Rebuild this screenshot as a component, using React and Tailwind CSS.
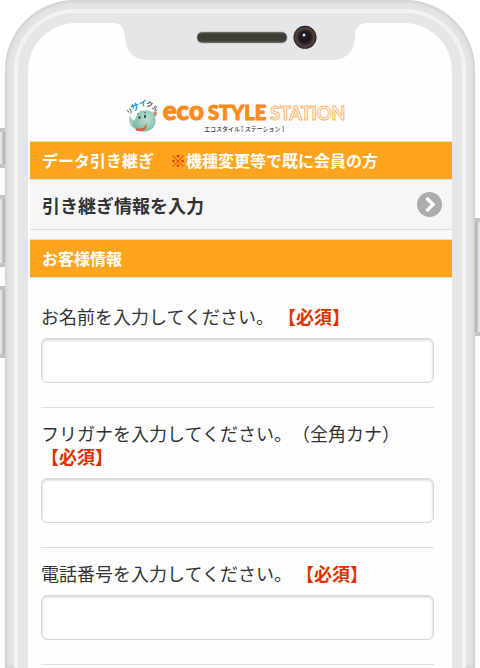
import React from "react";

const fields = [
  { id: "name", label: "お名前を入力してください。" },
  { id: "kana", label: "フリガナを入力してください。（全角カナ）" },
  { id: "tel", label: "電話番号を入力してください。", type: "tel" },
];

function Notch() {
  return (
    <svg className="mx-auto block h-[37px] w-[252px]" viewBox="0 0 252 37" aria-hidden="true">
      <defs>
        <linearGradient id="speaker" x1="0" y1="0" x2="0" y2="1">
          <stop offset="0" stopColor="#55554f" />
          <stop offset="0.3" stopColor="#3c3c34" />
          <stop offset="0.75" stopColor="#40403a" />
          <stop offset="1" stopColor="#5a5a54" />
        </linearGradient>
        <radialGradient id="lens">
          <stop offset="0" stopColor="#1c1416" />
          <stop offset="0.5" stopColor="#241a19" />
          <stop offset="0.8" stopColor="#54463f" />
          <stop offset="0.92" stopColor="#3a2f2b" />
          <stop offset="1" stopColor="#15100f" />
        </radialGradient>
      </defs>
      <path d="M0 0C8 1 10 6 11 14C12 30 20 37 36 37H216C232 37 240 30 241 14C241 6 244 1 252 0Z" fill="#e6e6e6" />
      <rect x="83" y="9" width="90" height="11" rx="5" fill="url(#speaker)" stroke="#aaa9a5" strokeWidth="0.6" />
      <circle cx="191" cy="14.300" r="11.500" fill="url(#lens)" />
      <circle cx="190.500" cy="14" r="3.500" fill="#1d1a28" />
      <circle cx="190" cy="12" r="1.500" fill="#dfe5ee" />
    </svg>
  );
}

function Rhino() {
  return (
    <svg className="h-9 w-8 shrink-0 overflow-visible" viewBox="0 0 32 36" aria-hidden="true">
      <defs>
        <radialGradient id="skin" cx="0.6" cy="0.4" r="0.7">
          <stop offset="0" stopColor="#bfe0d2" />
          <stop offset="1" stopColor="#74b3a0" />
        </radialGradient>
      </defs>
      <path d="M25 20C25 15 30 14 30 17C30 20 28 21 26 21Z" fill="#d98a6c" />
      <path d="M13 18C12 14 14 13 17 17Z" fill="#8fc4b2" />
      <path d="M3 19C1 25 3 32 9 33C13 34 13 28 11 26C8 25 4 24 3 19Z" fill="#9ccbbd" />
      <path d="M9 21C12 13 23 12 27 18C31 25 28 34 19 35.500C12 36 6 33 6 28C6 25 8 24 9 21Z" fill="url(#skin)" />
      <path d="M9 32C15 34 19 31 19 27C21 33 16 37 9 34.500Z" fill="#e2573a" />
      <ellipse cx="12.500" cy="21.500" rx="0.900" ry="1.600" fill="#2b3a38" />
      <ellipse cx="18" cy="20.500" rx="1" ry="1.700" fill="#2b3a38" />
      <path d="M10 18L12 17M17 17L19 16.500" stroke="#3b4a48" strokeWidth="0.7" />
      <g fontFamily='"Noto Sans CJK JP", sans-serif' fontWeight="700" textAnchor="middle">
        <text fill="#555" fontSize="6" transform="translate(4 17) rotate(-35)">リ</text>
        <text fill="#1590cf" fontSize="9" transform="translate(9 14) rotate(-20)">サ</text>
        <text fill="#1590cf" fontSize="8" transform="translate(16 10) rotate(-3)">イ</text>
        <text fill="#555" fontSize="7" transform="translate(22 11) rotate(15)">ク</text>
        <text fill="#555" fontSize="6" transform="translate(27 14) rotate(32)">ル</text>
      </g>
    </svg>
  );
}

function Logo() {
  return (
    <div className="flex justify-center gap-1 pt-9 pr-[10px] pb-2">
      <Rhino />
      <div className="flex flex-col items-center pt-[2px]">
        <div className="flex items-baseline gap-1 font-['Lato',sans-serif] text-[20px] leading-6 font-black whitespace-nowrap">
          <span className="text-[26px] text-[#ff8a1c] [-webkit-text-stroke:1px_#ff8a1c]">eco</span>
          <span className="text-[#ff8a1c] [-webkit-text-stroke:1px_#ff8a1c]">STYLE</span>
          <span className="text-lg leading-6 font-bold text-white [-webkit-text-stroke:1px_#ffb46c]">STATION</span>
        </div>
        <p className="pr-5 text-[6px] leading-[8px] font-medium text-[#333]">エコスタイル [ ステーション ]</p>
      </div>
    </div>
  );
}

function Bar({ children }) {
  return (
    <h2 className="border-y border-[#dddddd] bg-[#ffa41f] px-3 text-base leading-[37px] font-bold text-white">
      {children}
    </h2>
  );
}

function Field({ id, label, type = "text" }) {
  return (
    <div className="border-b border-[#dddddd] pt-[14px] pb-6">
      <label htmlFor={id} className="mb-[10px] block text-lg leading-[23px] text-[#333333]">
        {label} <strong className="inline-block font-bold text-[#dd3300]">【必須】</strong>
      </label>
      <input
        id={id}
        name={id}
        type={type}
        required
        className="block h-[45px] w-full rounded-md border border-[#d8d8d8] bg-white px-3 text-lg text-[#333333] shadow-[inset_0_1px_3px_rgba(0,0,0,0.2)] outline-none"
      />
    </div>
  );
}

function SideKey({ className }) {
  return (
    <span
      className={`absolute w-[5px] border-y-4 border-[#c4c4c4] ${className}`}
    />
  );
}

export default function App() {
  return (
    <div
      lang="ja"
      className="relative flex min-h-screen flex-col overflow-hidden bg-white px-[5px] font-['Noto_Sans_CJK_JP',sans-serif] [text-spacing-trim:space-all]"
    >
      <SideKey className="top-32 left-0 h-10 bg-linear-to-r from-[#f0f0f0] to-[#a8a8a8]" />
      <SideKey className="top-[195px] left-0 h-[72px] bg-linear-to-r from-[#f0f0f0] to-[#a8a8a8]" />
      <SideKey className="top-[286px] left-0 h-[72px] bg-linear-to-r from-[#f0f0f0] to-[#a8a8a8]" />
      <SideKey className="top-[218px] right-0 h-[118px] bg-linear-to-r from-[#a8a8a8] to-[#f0f0f0]" />

      <div className="flex grow flex-col rounded-t-[70px] bg-[#e4e4e4] px-[9px] pt-[9px] shadow-[inset_0_0_4px_1px_#c8c8c8]">
        <div className="flex grow flex-col rounded-t-[61px] bg-[#f2f2f2] px-1 pt-1">
          <div className="flex grow flex-col rounded-t-[57px] bg-[#e6e6e6] px-[10px] pt-[10px]">
            <main className="grow rounded-t-[48px] bg-[#fefefe]">
              <Notch />
              <div className="ml-[2px]">
                <header>
                  <Logo />
                </header>
                <Bar>
                  データ引き継ぎ　<span className="font-normal text-[#dd3300]">※</span>機種変更等で既に会員の方
                </Bar>
                <div className="bg-[#f9f9f9] pb-[9px]">
                  <a
                    href="#transfer"
                    className="flex h-[50px] items-center justify-between border-b border-[#dddddd] bg-[#f6f6f6] pr-[10px] pl-3 text-lg font-bold text-[#333333]"
                  >
                    引き継ぎ情報を入力
                    <svg className="size-[25px]" viewBox="0 0 25 25" aria-hidden="true">
                      <circle cx="12.500" cy="12.500" r="12.500" fill="#acacac" />
                      <path d="M9.500 6L16 12.500L9.500 19" fill="none" stroke="#fff" strokeWidth="3.500" />
                    </svg>
                  </a>
                </div>
                <Bar>お客様情報</Bar>
                <form className="pt-[13px] pr-[18px] pl-[11px]">
                  {fields.map((field) => (
                    <Field key={field.id} {...field} />
                  ))}
                </form>
              </div>
            </main>
          </div>
        </div>
      </div>
    </div>
  );
}
